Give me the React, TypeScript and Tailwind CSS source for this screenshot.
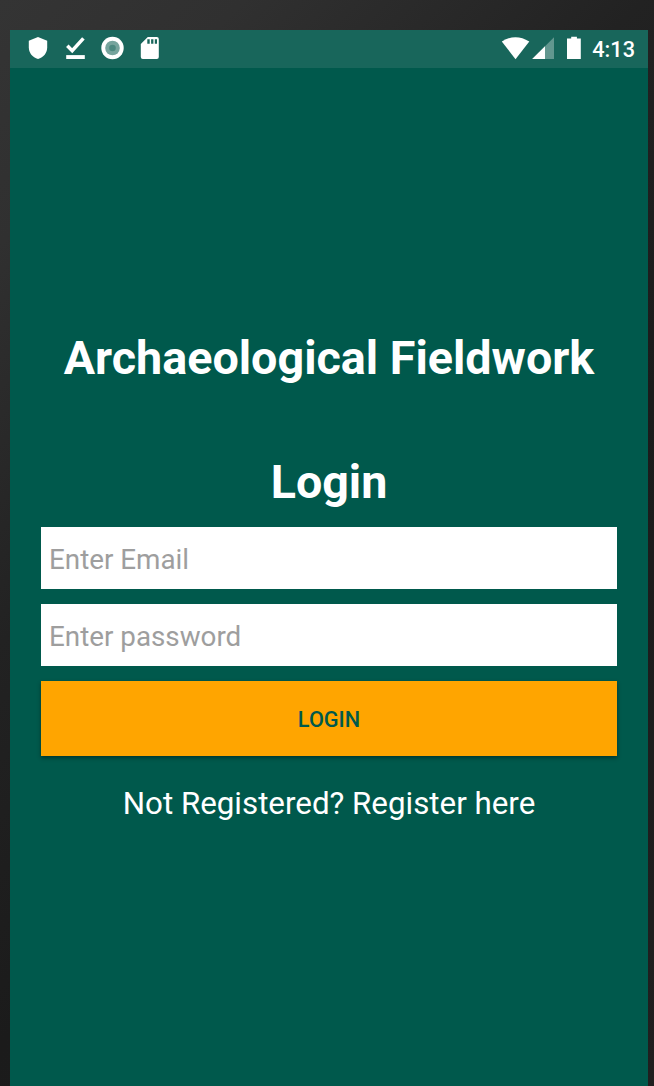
function StatusBar() {
  return (
    <header className="flex h-[38px] items-center bg-[#18665b] text-white">
      <div className="flex h-full flex-1 items-center">
        <svg width="150" height="38" viewBox="0 0 150 38" fill="currentColor" aria-hidden="true">
          <path d="M28 7 37.2 10.8V17.2C37.2 23 33.6 27.3 28 29 22.4 27.3 18.8 23 18.8 17.2V10.8Z" />
          <path d="M57.3 15.8 62.2 20.7 73.4 8.3" fill="none" stroke="currentColor" strokeWidth="3.5" />
          <path d="M56.2 25.1H74.8V29H56.2Z" />
          <circle cx="102.5" cy="18" r="11.2" />
          <circle cx="102.5" cy="18" r="7.3" fill="#76a49d" />
          <circle cx="102.5" cy="18" r="3.3" fill="#4b887f" />
          <path
            fillRule="evenodd"
            d="M137.8 7H146.8Q148.8 7 148.8 9V27Q148.8 29 146.8 29H132.8Q130.8 29 130.8 27V14ZM137.3 9.3V13.7H139.7V9.3ZM141.1 9.3V13.7H143.4V9.3ZM144.8 9.3V13.7H147V9.3Z"
          />
        </svg>
      </div>
      <svg width="84" height="38" viewBox="0 0 84 38" fill="currentColor" aria-hidden="true">
        <path d="M3.8 11.5Q17.5 2.8 31.3 11.5L17.5 29.2Z" />
        <path d="M56 7.2V29H34.2Z" opacity="0.32" />
        <path d="M47 16.2V29H34.2Z" />
        <path d="M73.2 6.8H78.9V8.5H82.8V29H69V8.5H73.2Z" />
      </svg>
      <span className="mr-[13px] ml-[10px] pt-px text-[21.7px] leading-[26px] font-medium">4:13</span>
    </header>
  );
}

const fieldClass =
  "block h-[62px] w-full bg-white px-2 pt-[2px] text-[27.8px] text-black outline-none placeholder:text-[#9e9e9e]";

export default function App() {
  return (
    <div className="h-[1086px] w-[654px] overflow-hidden bg-[linear-gradient(135deg,#343434_0%,#303030_14%,#222222_37%,#1b1b1b_60%,#201f1f_100%)] pt-[30px] pr-[6px] pl-[10px] font-['Roboto',sans-serif]">
      <main className="h-[1056px] bg-[#00594c]">
        <StatusBar />
        <form className="flex flex-col pt-[262px] pr-[31px] pl-[31px]" onSubmit={(e) => e.preventDefault()}>
          <h1 className="text-center text-[46.7px] leading-[56px] font-bold whitespace-nowrap text-white">
            Archaeological Fieldwork
          </h1>
          <h2 className="mt-[68px] text-center text-[46.6px] leading-[56px] font-bold text-white">Login</h2>
          <div className="mt-[17px] flex flex-col gap-[15px]">
            <input type="email" placeholder="Enter Email" className={fieldClass} />
            <input type="password" placeholder="Enter password" className={fieldClass} />
            <button
              type="submit"
              className="h-[75px] bg-[#ffa500] pt-[3px] text-[21.7px] font-medium text-[#00594c] shadow-[0_2px_4px_rgba(0,0,0,0.4)]"
            >
              LOGIN
            </button>
          </div>
          <a className="mt-[30px] text-center text-[31.3px] leading-[36px] text-white">Not Registered? Register here</a>
        </form>
      </main>
    </div>
  );
}
